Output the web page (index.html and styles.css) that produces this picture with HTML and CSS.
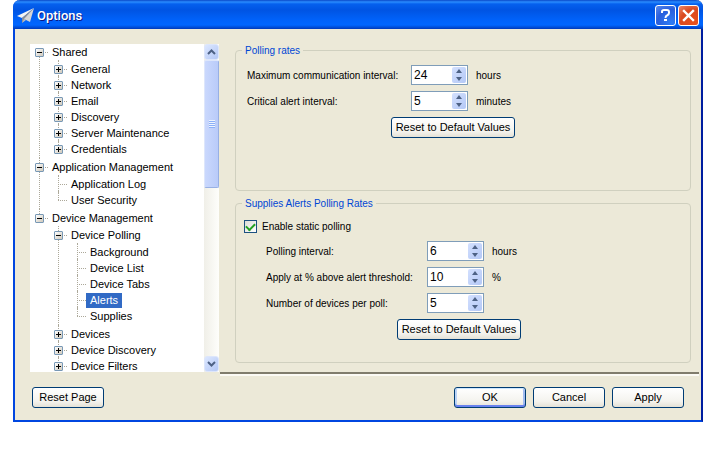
FILE: index.html
```
<!DOCTYPE html>
<html lang="en">

<head>
  <meta charset="UTF-8">
  <title>Options</title>
  <link rel="stylesheet" href="styles.css">
</head>

<body>
  <div class="window">
    <header class="titlebar">
      <svg class="appIcon" width="17" height="16" viewBox="0 0 17 16">
        <path d="M17 0 L0 8 L5 10 Z" fill="#f4f4f4" />
        <path d="M17 0 L5 10 L5 15 L8 11 Z" fill="#8b8f96" />
        <path d="M17 0 L7 11 L13 14 Z" fill="#d6d6d6" />
        <path d="M5 15 L7 11 L9 12 Z" fill="#c0c0c0" />
      </svg>
      <h1>Options</h1>
      <button type="button" class="titleBtn help" aria-label="Help">
        <svg width="19" height="19" viewBox="0 0 19 19">
          <path d="M6 7 V5.500 Q6 4 8 4 H11 Q13 4 13 6 V7 Q13 8.500 11 9.500 Q9.500 10 9.500 12" fill="none" stroke="#fff" stroke-width="2" />
          <rect x="8" y="13" width="3" height="2" fill="#fff" />
        </svg>
      </button>
      <button type="button" class="titleBtn close" aria-label="Close">
        <svg width="19" height="19" viewBox="0 0 19 19">
          <path d="M5 5 L14 14 M14 5 L5 14" stroke="#fff" stroke-width="2.400" stroke-linecap="square" />
        </svg>
      </button>
    </header>

    <main class="content">
      <nav class="tree">
        <ul class="treeList">
          <li>
            <div class="row"><button type="button" class="toggle" aria-label="Collapse"></button><span class="name">Shared</span></div>
            <ul>
              <li><div class="row"><button type="button" class="toggle plus" aria-label="Expand"></button><span class="name">General</span></div></li>
              <li><div class="row"><button type="button" class="toggle plus" aria-label="Expand"></button><span class="name">Network</span></div></li>
              <li><div class="row"><button type="button" class="toggle plus" aria-label="Expand"></button><span class="name">Email</span></div></li>
              <li><div class="row"><button type="button" class="toggle plus" aria-label="Expand"></button><span class="name">Discovery</span></div></li>
              <li><div class="row"><button type="button" class="toggle plus" aria-label="Expand"></button><span class="name">Server Maintenance</span></div></li>
              <li><div class="row"><button type="button" class="toggle plus" aria-label="Expand"></button><span class="name">Credentials</span></div></li>
            </ul>
          </li>
          <li>
            <div class="row"><button type="button" class="toggle" aria-label="Collapse"></button><span class="name">Application Management</span></div>
            <ul>
              <li><div class="row"><span class="name">Application Log</span></div></li>
              <li><div class="row"><span class="name">User Security</span></div></li>
            </ul>
          </li>
          <li>
            <div class="row"><button type="button" class="toggle" aria-label="Collapse"></button><span class="name">Device Management</span></div>
            <ul>
              <li>
                <div class="row"><button type="button" class="toggle" aria-label="Collapse"></button><span class="name">Device Polling</span></div>
                <ul>
                  <li><div class="row"><span class="name">Background</span></div></li>
                  <li><div class="row"><span class="name">Device List</span></div></li>
                  <li><div class="row"><span class="name">Device Tabs</span></div></li>
                  <li><div class="row"><span class="name selected">Alerts</span></div></li>
                  <li><div class="row"><span class="name">Supplies</span></div></li>
                </ul>
              </li>
              <li><div class="row"><button type="button" class="toggle plus" aria-label="Expand"></button><span class="name">Devices</span></div></li>
              <li><div class="row"><button type="button" class="toggle plus" aria-label="Expand"></button><span class="name">Device Discovery</span></div></li>
              <li class="more"><div class="row"><button type="button" class="toggle plus" aria-label="Expand"></button><span class="name">Device Filters</span></div></li>
            </ul>
          </li>
        </ul>
        <div class="scrollbar">
          <button type="button" class="scrollBtn" aria-label="Scroll up">
            <svg width="9" height="6" viewBox="0 0 9 6"><path d="M1 5 L4.500 1.500 L8 5" fill="none" stroke="#4d6185" stroke-width="2" /></svg>
          </button>
          <div class="thumb"></div>
          <button type="button" class="scrollBtn" aria-label="Scroll down">
            <svg width="9" height="6" viewBox="0 0 9 6"><path d="M1 1 L4.500 4.500 L8 1" fill="none" stroke="#4d6185" stroke-width="2" /></svg>
          </button>
        </div>
      </nav>

      <form class="panel">
        <fieldset class="rates">
          <legend>Polling rates</legend>
          <div class="fields">
            <label for="maxInterval">Maximum communication interval:</label>
            <div class="spinner">
              <input type="text" id="maxInterval" value="24">
              <div class="arrows">
                <button type="button" class="up" aria-label="Increase"></button>
                <button type="button" class="down" aria-label="Decrease"></button>
              </div>
            </div>
            <span>hours</span>

            <label for="critInterval">Critical alert interval:</label>
            <div class="spinner">
              <input type="text" id="critInterval" value="5">
              <div class="arrows">
                <button type="button" class="up" aria-label="Increase"></button>
                <button type="button" class="down" aria-label="Decrease"></button>
              </div>
            </div>
            <span>minutes</span>
          </div>
          <button type="button" class="btn reset">Reset to Default Values</button>
        </fieldset>

        <fieldset class="supplies">
          <legend>Supplies Alerts Polling Rates</legend>
          <div class="check">
            <input type="checkbox" id="staticPolling" checked>
            <label for="staticPolling">Enable static polling</label>
          </div>
          <div class="fields">
            <label for="pollInterval">Polling interval:</label>
            <div class="spinner">
              <input type="text" id="pollInterval" value="6">
              <div class="arrows">
                <button type="button" class="up" aria-label="Increase"></button>
                <button type="button" class="down" aria-label="Decrease"></button>
              </div>
            </div>
            <span>hours</span>

            <label for="threshold">Apply at % above alert threshold:</label>
            <div class="spinner">
              <input type="text" id="threshold" value="10">
              <div class="arrows">
                <button type="button" class="up" aria-label="Increase"></button>
                <button type="button" class="down" aria-label="Decrease"></button>
              </div>
            </div>
            <span>%</span>

            <label for="devices">Number of devices per poll:</label>
            <div class="spinner">
              <input type="text" id="devices" value="5">
              <div class="arrows">
                <button type="button" class="up" aria-label="Increase"></button>
                <button type="button" class="down" aria-label="Decrease"></button>
              </div>
            </div>
          </div>
          <button type="button" class="btn reset">Reset to Default Values</button>
        </fieldset>
      </form>
    </main>

    <footer class="footer">
      <button type="button" class="btn first">Reset Page</button>
      <button type="button" class="btn default">OK</button>
      <button type="button" class="btn">Cancel</button>
      <button type="button" class="btn">Apply</button>
    </footer>
  </div>
</body>

</html>
```

FILE: styles.css
```
* {
  box-sizing: border-box;
}

body {
  margin: 0;
  background-color: white;
  color: black;
  font-family: "Liberation Sans", Arial, sans-serif;
  font-size: 11px;
  line-height: 13px;
}

button,
input {
  font: inherit;
  color: inherit;
  margin: 0;
  padding: 0;
}

.window {
  margin-left: 13px;
  background-color: #ece9d8;
  border: 2px solid #0046e0;
  border-top: none;
  border-right-color: #001ea0;
  border-radius: 7px 7px 0 0;
}

/* title bar */

.titlebar {
  display: flex;
  align-items: center;
  gap: 2px;
  height: 29px;
  margin: 0 -2px;
  padding: 2px 4px 0;
  border-radius: 7px 7px 0 0;
  background: linear-gradient(#0a48c8 0, #2a8cff 2px, #0560ee 4px, #0054e3 10px, #0062fa 20px, #0066ff 25px, #0046cc 28px, #0038b8 29px);
}

.titlebar h1 {
  flex: 1;
  margin: 0;
  padding-left: 1px;
  color: white;
  font-family: Roboto, sans-serif;
  font-size: 13px;
  font-weight: 500;
  line-height: 18px;
  text-shadow: 1px 1px #0a1883;
}

.titleBtn {
  width: 21px;
  height: 21px;
  border: 1px solid white;
  border-radius: 3px;
}

.titleBtn svg {
  display: block;
}

.help {
  background: radial-gradient(circle at 80% 90%, #2f7cf5, #2a5fdc 60%, #5b8bee);
}

.close {
  background: radial-gradient(circle at 80% 90%, #e8501c, #da4a20 60%, #ee8a6c);
}

.content {
  display: flex;
  padding: 15px 2px 0 15px;
}

/* tree */

.tree {
  display: flex;
  flex: none;
  width: 189px;
  height: 328px;
  background-color: white;
}

.tree ul {
  list-style: none;
  margin: 1px 0 2px 19px;
  padding: 0;
}

.tree .treeList {
  flex: 1;
  margin: 0;
  overflow: hidden;
}

.tree li {
  position: relative;
}

/* dotted connectors */
.tree li::before {
  content: "";
  position: absolute;
  left: 9px;
  top: -1px;
  bottom: -1px;
  border-left: 1px dotted #aca899;
}

.tree li:last-child::before {
  bottom: auto;
  height: 9px;
}

.tree li.more::before {
  height: 18px;
}

.treeList > li:first-child::before {
  top: 8px;
}

.row {
  position: relative;
  display: flex;
  align-items: center;
  height: 16px;
  padding-left: 18px;
}

.row::before {
  content: "";
  position: absolute;
  left: 9px;
  top: 8px;
  width: 9px;
  border-top: 1px dotted #aca899;
}

.row .toggle {
  position: absolute;
  left: 5px;
  top: 4px;
  width: 9px;
  height: 9px;
  border: 1px solid #7898b5;
  border-radius: 1px;
  background: linear-gradient(black, black) center / 5px 1px no-repeat, linear-gradient(135deg, white, #cfc8ba);
}

.row .plus {
  background: linear-gradient(black, black) center / 5px 1px no-repeat, linear-gradient(black, black) center / 1px 5px no-repeat, linear-gradient(135deg, white, #cfc8ba);
}

.name {
  padding: 1px 4px;
  white-space: nowrap;
}

.selected {
  background-color: #316ac5;
  color: white;
}

.scrollbar {
  display: flex;
  flex-direction: column;
  width: 15px;
  background: linear-gradient(to right, #f0efe8, #fefefb);
}

.scrollBtn {
  display: flex;
  align-items: center;
  justify-content: center;
  width: 15px;
  height: 16px;
  border: 1px solid #dde6fb;
  border-radius: 3px;
  background: linear-gradient(135deg, #dce7ff, #b4c8f6);
}

.thumb {
  height: 128px;
  border: 1px solid #98b0e4;
  border-left-color: #dde6fb;
  border-top-color: #dde6fb;
  border-radius: 2px;
  background: repeating-linear-gradient(#eef4fe 0 1px, #8cb0f8 1px 2px) center / 6px 8px no-repeat, linear-gradient(to right, #cad8fd, #b9cbf9);
}

.scrollbar .scrollBtn:last-child {
  margin-top: auto;
}

/* settings panel */

.panel {
  flex: 1;
  display: flex;
  flex-direction: column;
  gap: 6px;
  margin-left: 1px;
  padding: 0 8px 9px 15px;
  border-bottom: 2px solid #807c6c;
  box-shadow: 0 2px #fbfaf4;
  font-size: 10px;
}

fieldset {
  min-width: 0;
  margin: 0;
  padding: 8px 11px;
  border: 1px solid #d0d0bf;
  border-radius: 4px;
}

legend {
  margin-left: -5px;
  padding: 0 3px;
  color: #0046d5;
}

.rates {
  min-height: 147px;
}

.supplies {
  min-height: 166px;
  padding-top: 10px;
}

.fields {
  display: grid;
  grid-template-columns: 164px 57px auto;
  align-items: center;
  row-gap: 6px;
}

.fields label {
  white-space: nowrap;
}

.fields span {
  padding-left: 8px;
}

.spinner {
  display: flex;
  height: 20px;
  padding: 1px;
  border: 1px solid #7f9db9;
  background-color: white;
}

.spinner input {
  flex: 1;
  min-width: 0;
  height: 15px;
  padding-left: 1px;
  border: none;
  background: none;
  font-size: 12px;
}

.arrows {
  display: flex;
  flex-direction: column;
  width: 14px;
  border-radius: 2px;
  background: linear-gradient(135deg, #d3e0fe, #b4c8f6);
}

.arrows button {
  flex: 1;
  border: none;
  background: none;
  display: flex;
  align-items: center;
  justify-content: center;
}

.arrows button::before {
  content: "";
  border: 3px solid transparent;
}

.arrows .up::before {
  border-top: none;
  border-bottom: 4px solid #4d6185;
}

.arrows .down::before {
  border-bottom: none;
  border-top: 4px solid #4d6185;
}

.check {
  display: flex;
  align-items: center;
  gap: 5px;
  margin-left: -3px;
}

.check input {
  appearance: none;
  width: 13px;
  height: 13px;
  border: 1px solid #1c5180;
  background: linear-gradient(135deg, #dcdcd7, white);
  display: grid;
  place-items: center;
}

.check input:checked::before {
  content: "";
  width: 7px;
  height: 4px;
  border: solid #21a121;
  border-width: 0 0 2px 2px;
  transform: translateY(-1px) rotate(-45deg);
}

.supplies .fields {
  grid-template-columns: 161px 57px auto;
  margin: 8px 0 0 19px;
}

.btn {
  width: 72px;
  height: 21px;
  border: 1px solid #003c74;
  border-radius: 3px;
  background: linear-gradient(white, #f4f3ee 70%, #e4e1d6);
  font-size: 11px;
}

.reset {
  display: block;
  width: 124px;
  margin: 6px 0 0 144px;
}

.supplies .reset {
  margin-left: 150px;
}

/* bottom buttons */

.footer {
  display: flex;
  gap: 7px;
  padding: 13px 17px 12px;
}

.first {
  margin-right: auto;
}

.default {
  box-shadow: inset 0 1px #cee7ff, inset 0 -2px #6982ee, inset 2px 0 #bcd4f6, inset -2px 0 #a2bcf0;
}
```
